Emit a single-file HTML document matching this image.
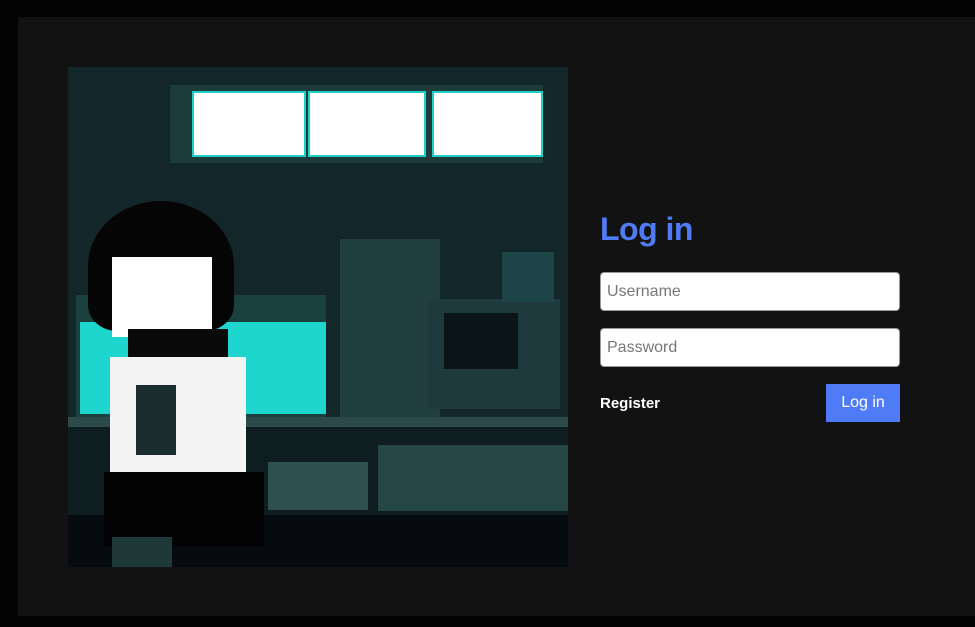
<!DOCTYPE html>
<html><head><style>
body{margin:0;width:975px;height:627px;background:#030303;position:relative;overflow:hidden;font-family:"Liberation Sans",sans-serif}
.p{position:absolute;background:#121212;left:18px;top:17px;width:957px;height:599px}
.a{position:absolute}
.art{position:absolute;left:68px;top:67px;width:500px;height:500px;background:#13272b;overflow:hidden}
h1{position:absolute;left:600px;top:211px;margin:0;font-family:"Liberation Sans",sans-serif;font-weight:bold;font-size:32px;color:#4f7cf6;letter-spacing:-0.5px}
.in{position:absolute;left:600px;height:39px;background:#fff;border:1px solid #999;border-radius:4px;box-sizing:border-box;width:300px;color:#777;font-size:16px;padding:10px 6px;line-height:18px}
.reg{position:absolute;left:600px;top:395px;color:#fff;font-family:"Liberation Sans",sans-serif;font-weight:bold;font-size:15px}
.btn{position:absolute;left:826px;top:384px;width:74px;height:38px;background:#4f7cf6;color:#fff;font-size:16px;text-align:center;line-height:37px}
</style></head><body>
<div class="p"></div>
<div class="art">
 <div class="a" style="left:102px;top:18px;width:373px;height:78px;background:#1c3b3b"></div>
 <div class="a" style="left:124px;top:24px;width:114px;height:66px;background:#fff;border:2px solid #1fcfc8;box-sizing:border-box"></div>
 <div class="a" style="left:240px;top:24px;width:118px;height:66px;background:#fff;border:2px solid #1fcfc8;box-sizing:border-box"></div>
 <div class="a" style="left:364px;top:24px;width:111px;height:66px;background:#fff;border:2px solid #1fcfc8;box-sizing:border-box"></div>
 <div class="a" style="left:8px;top:228px;width:250px;height:122px;background:#1b4040"></div>
 <div class="a" style="left:12px;top:255px;width:246px;height:92px;background:#1fd6cf"></div>
 <div class="a" style="left:272px;top:172px;width:100px;height:178px;background:#223f40"></div>
 <div class="a" style="left:360px;top:232px;width:132px;height:110px;background:#1e3a3c"></div>
 <div class="a" style="left:376px;top:246px;width:74px;height:56px;background:#0b1517"></div>
 <div class="a" style="left:434px;top:185px;width:52px;height:50px;background:#1d4446"></div>
 <div class="a" style="left:0;top:350px;width:500px;height:10px;background:#2d4a4a"></div>
 <div class="a" style="left:0;top:360px;width:500px;height:88px;background:#0d1d20"></div>
 <div class="a" style="left:310px;top:378px;width:190px;height:66px;background:#264646"></div>
 <div class="a" style="left:200px;top:395px;width:100px;height:48px;background:#2f5050"></div>
 <div class="a" style="left:0;top:448px;width:500px;height:52px;background:#060c0e"></div>
 <div class="a" style="left:20px;top:134px;width:146px;height:130px;background:#050505;border-radius:50% 50% 20% 20%"></div>
 <div class="a" style="left:44px;top:190px;width:100px;height:80px;background:#fff"></div>
 <div class="a" style="left:60px;top:262px;width:100px;height:40px;background:#0a0a0a"></div>
 <div class="a" style="left:42px;top:290px;width:136px;height:120px;background:#f4f4f4"></div>
 <div class="a" style="left:68px;top:318px;width:40px;height:70px;background:#1a2c2c"></div>
 <div class="a" style="left:36px;top:405px;width:160px;height:75px;background:#030303"></div>
 <div class="a" style="left:44px;top:470px;width:60px;height:30px;background:#1f3838"></div>
</div>
<h1>Log in</h1>
<div class="in" style="top:272px">Username</div>
<div class="in" style="top:328px">Password</div>
<div class="reg">Register</div>
<div class="btn">Log in</div>
</body></html>
